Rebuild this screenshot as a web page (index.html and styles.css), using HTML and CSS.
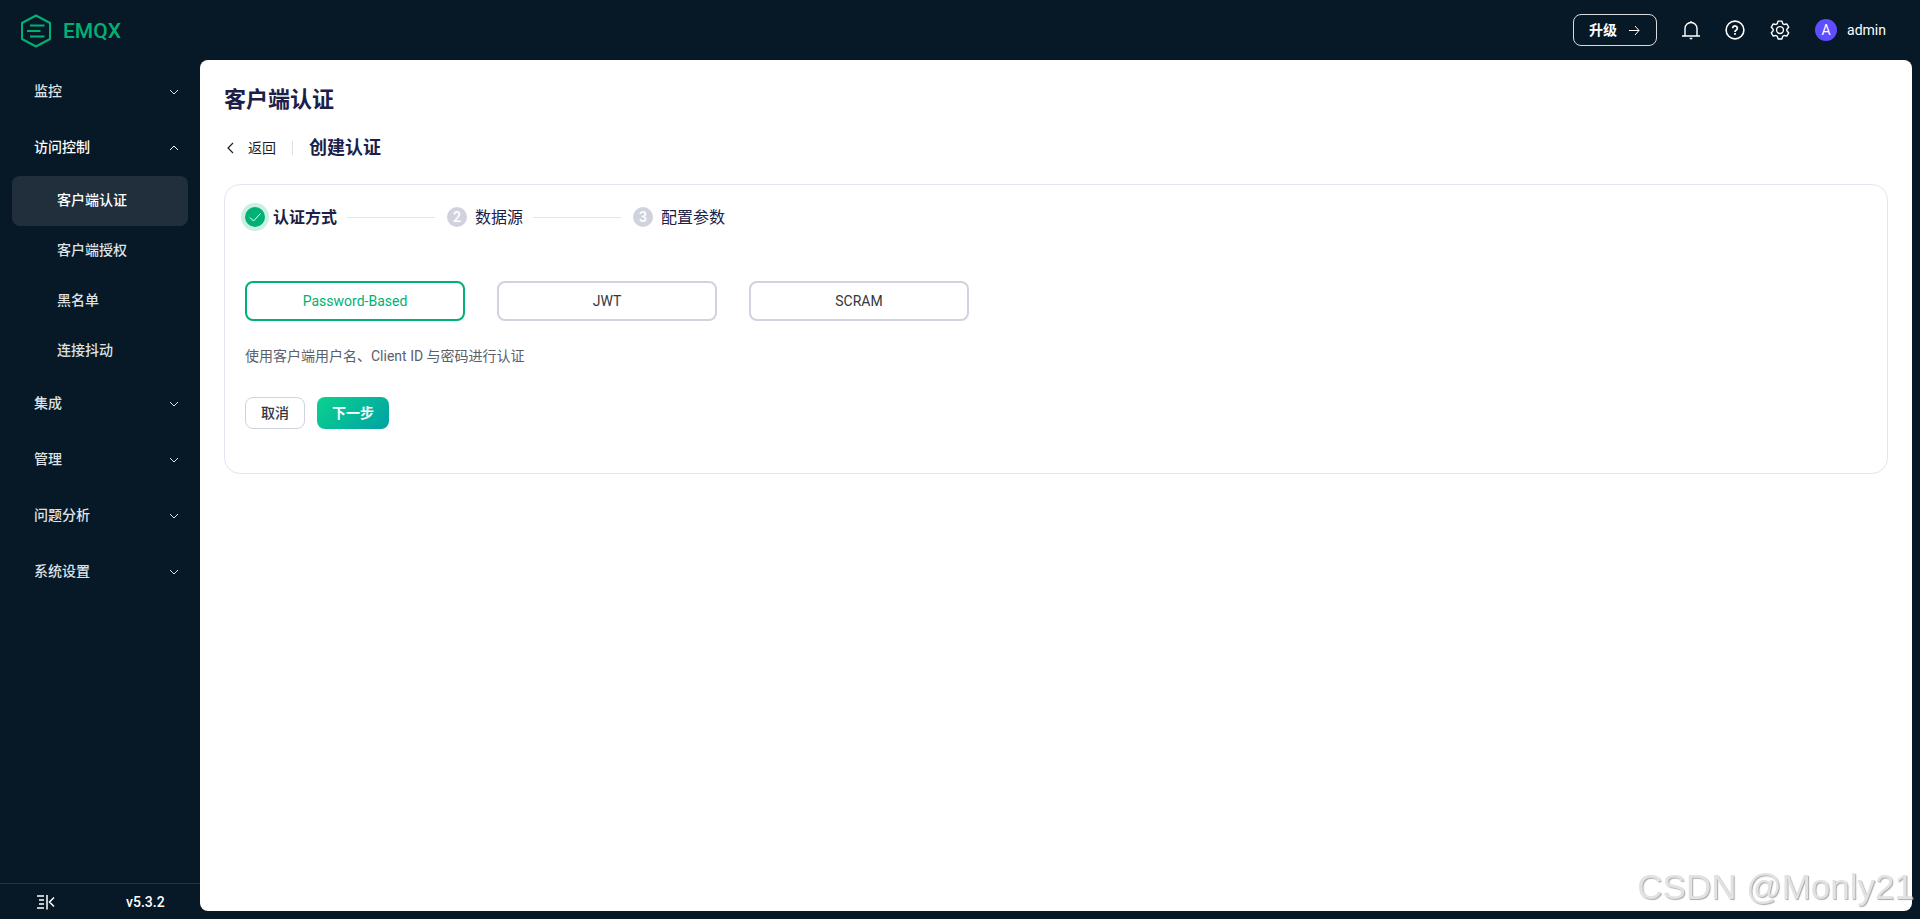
FILE: index.html
```html
<!DOCTYPE html>
<html lang="zh-CN">
<head>
<meta charset="utf-8">
<title>EMQX Dashboard</title>
<link rel="stylesheet" href="styles.css">
</head>
<body>
<svg class="defs" aria-hidden="true">
  <symbol id="chevron" viewBox="0 0 14 14"><path d="M3 5l4 4 4-4" fill="none" stroke="currentColor"/></symbol>
</svg>
<div class="app">
  <header class="topbar">
    <a class="logo" href="#">
      <svg width="32" height="34" viewBox="0 0 32 34" fill="none" stroke="currentColor" stroke-width="2" aria-hidden="true">
        <path d="M16 1.500L30 9V25L16 32.500L2 25V9Z" stroke-linejoin="round"/>
        <path d="M10 11.500H24.500M7 17H20.500M10 22.500H24.500"/>
      </svg>
      <span>EMQX</span>
    </a>
    <div class="tools">
      <button class="upgrade" type="button">升级
        <svg width="14" height="14" viewBox="0 0 14 14" fill="none" stroke="currentColor" aria-hidden="true"><path d="M2 7.500H12M8 3l4 4.500L8 12"/></svg>
      </button>
      <button class="tool" type="button" aria-label="通知">
        <svg width="20" height="20" viewBox="0 0 20 20" fill="none" stroke="currentColor" stroke-width="1.400" aria-hidden="true"><path d="M1 16H19M4 16V8.500a6 6 0 0 1 12 0V16M10 2.500V1M8.700 18.500h2.600"/></svg>
      </button>
      <button class="tool" type="button" aria-label="帮助">
        <svg width="20" height="20" viewBox="0 0 20 20" fill="none" stroke="currentColor" stroke-width="1.600" aria-hidden="true"><circle cx="10" cy="10" r="8.900"/><path d="M7.700 8.200a2.300 2.200 0 1 1 3.600 1.800q-1.300.8-1.300 2M10 13v1.700" stroke-width="1.800"/></svg>
      </button>
      <button class="tool" type="button" aria-label="设置">
        <svg width="22" height="22" viewBox="0 0 1024 1024" fill="currentColor" aria-hidden="true"><path d="M600.704 64a32 32 0 0 1 30.464 22.208l35.200 109.376c14.784 7.232 28.928 15.360 42.432 24.512l112.384-24.192a32 32 0 0 1 34.432 15.360L944.320 364.800a32 32 0 0 1-4.032 37.504l-77.120 85.120a357.120 357.120 0 0 1 0 49.024l77.120 85.248a32 32 0 0 1 4.032 37.504l-88.704 153.600a32 32 0 0 1-34.432 15.296L708.800 803.904c-13.440 9.088-27.648 17.280-42.368 24.512l-35.264 109.376A32 32 0 0 1 600.704 960H423.296a32 32 0 0 1-30.464-22.208L357.696 828.480a351.616 351.616 0 0 1-42.560-24.640l-112.320 24.256a32 32 0 0 1-34.432-15.360L79.680 659.200a32 32 0 0 1 4.032-37.504l77.120-85.248a357.120 357.120 0 0 1 0-48.896l-77.120-85.248A32 32 0 0 1 79.680 364.800l88.704-153.600a32 32 0 0 1 34.432-15.296l112.320 24.256c13.568-9.152 27.776-17.408 42.560-24.640l35.200-109.312A32 32 0 0 1 423.232 64H600.640zm-23.424 64H446.720l-36.352 113.088-24.512 11.968a294.113 294.113 0 0 0-34.816 20.096l-22.656 15.360-116.224-25.088-65.280 113.152 79.680 88.192-1.920 27.136a293.120 293.120 0 0 0 0 40.192l1.920 27.136-79.808 88.192 65.344 113.152 116.224-25.024 22.656 15.296a294.113 294.113 0 0 0 34.816 20.096l24.512 11.968L446.720 896h130.688l36.480-113.152 24.448-11.904a288.282 288.282 0 0 0 34.752-20.096l22.592-15.296 116.288 25.024 65.280-113.152-79.744-88.192 1.920-27.136a293.120 293.120 0 0 0 0-40.256l-1.920-27.136 79.808-88.128-65.344-113.152-116.288 24.960-22.592-15.232a287.616 287.616 0 0 0-34.752-20.096l-24.448-11.904L577.344 128zM512 320a192 192 0 1 1 0 384 192 192 0 0 1 0-384zm0 64a128 128 0 1 0 0 256 128 128 0 0 0 0-256z"/></svg>
      </button>
      <button class="user" type="button"><span class="avatar">A</span>admin</button>
    </div>
  </header>

  <aside class="sidebar">
    <nav class="menu">
      <button class="group" type="button">监控<svg class="chev"><use href="#chevron"/></svg></button>
      <button class="group open" type="button" aria-expanded="true">访问控制<svg class="chev"><use href="#chevron"/></svg></button>
      <a class="item active" href="#">客户端认证</a>
      <a class="item" href="#">客户端授权</a>
      <a class="item" href="#">黑名单</a>
      <a class="item" href="#">连接抖动</a>
      <button class="group" type="button">集成<svg class="chev"><use href="#chevron"/></svg></button>
      <button class="group" type="button">管理<svg class="chev"><use href="#chevron"/></svg></button>
      <button class="group" type="button">问题分析<svg class="chev"><use href="#chevron"/></svg></button>
      <button class="group" type="button">系统设置<svg class="chev"><use href="#chevron"/></svg></button>
    </nav>
    <footer class="side-foot">
      <button class="collapse" type="button" aria-label="收起菜单">
        <svg width="18" height="16" viewBox="0 0 18 16" fill="none" stroke="currentColor" stroke-width="1.500" aria-hidden="true"><path d="M0 2H7M2 6H7M2 10H7M0 14H7M10 1V15.500M17 3.500L12.500 8L17 12.500"/></svg>
      </button>
      <span class="version">v5.3.2</span>
    </footer>
  </aside>

  <main class="page">
    <h1>客户端认证</h1>
    <div class="crumb">
      <a class="back" href="#"><svg width="14" height="14" viewBox="0 0 14 14" fill="none" stroke="currentColor" stroke-width="1.200" aria-hidden="true"><path d="M9 2L4 7L9 12"/></svg>返回</a>
      <h2>创建认证</h2>
    </div>
    <section class="card">
      <ol class="steps">
        <li class="step current"><span class="dot"><svg width="14" height="14" viewBox="0 0 14 14" fill="none" stroke="currentColor" aria-hidden="true"><path d="M2 7.500L5.500 11L12.500 3.500"/></svg></span><span class="step-name">认证方式</span></li>
        <li class="step"><span class="dot">2</span><span class="step-name">数据源</span></li>
        <li class="step"><span class="dot">3</span><span class="step-name">配置参数</span></li>
      </ol>
      <form>
        <div class="choices" role="radiogroup" aria-label="认证方式">
          <label class="choice"><input type="radio" name="mechanism" checked>Password-Based</label>
          <label class="choice"><input type="radio" name="mechanism">JWT</label>
          <label class="choice"><input type="radio" name="mechanism">SCRAM</label>
        </div>
        <p class="hint">使用客户端用户名、Client ID 与密码进行认证</p>
        <div class="actions">
          <button class="btn" type="button">取消</button>
          <button class="btn primary" type="button">下一步</button>
        </div>
      </form>
    </section>
  </main>
</div>
<div class="watermark">CSDN @Monly21</div>
</body>
</html>
```
FILE: styles.css
```css
* { box-sizing: border-box; }

body {
  margin: 0;
  background: #071926;
  color: #1a2048;
  font: 14px/20px Roboto, "Noto Sans CJK SC", sans-serif;
}

button {
  padding: 0;
  border: 0;
  background: none;
  color: inherit;
  font: inherit;
  cursor: pointer;
}

a { color: inherit; text-decoration: none; }
h1, h2, p, ol { margin: 0; padding: 0; }
svg { display: block; flex: none; }
.defs { position: absolute; width: 0; height: 0; }

.app {
  display: grid;
  grid-template: 60px 1fr / 200px 1fr;
  min-height: 100vh;
}

/* Top bar */
.topbar {
  grid-column: 1 / -1;
  display: flex;
  align-items: center;
  justify-content: space-between;
  padding: 0 34px 0 20px;
  color: #fff;
}

.logo {
  display: flex;
  align-items: center;
  gap: 11px;
  padding-top: 2px;
  color: #00b173;
  font-size: 21px;
  font-weight: 500;
}

.tools { display: flex; align-items: center; }

.upgrade {
  display: flex;
  align-items: center;
  gap: 10px;
  height: 32px;
  margin-right: 24px;
  padding: 0 15px;
  border: 1px solid #d8dce2;
  border-radius: 8px;
  font-weight: 700;
}

.tool { margin-right: 24px; }
.user { display: flex; align-items: center; gap: 10px; }

.avatar {
  width: 22px;
  height: 22px;
  border-radius: 50%;
  background: #5e4eff;
  line-height: 22px;
}

/* Sidebar */
.sidebar { display: flex; flex-direction: column; color: #dfe2e5; }
.menu { flex: 1; padding-top: 4px; font-weight: 500; }

.group {
  display: flex;
  align-items: center;
  justify-content: space-between;
  width: 100%;
  height: 56px;
  padding: 0 19px 2px 34px;
}

.group.open { color: #fff; }
.chev { width: 14px; height: 14px; margin-top: 2px; }
.open .chev { transform: rotate(180deg); }

.item {
  display: flex;
  align-items: center;
  height: 50px;
  margin: 0 12px;
  padding: 0 0 2px 45px;
  border-radius: 8px;
}

.item.active { background: #202f3b; color: #fff; }

.side-foot {
  display: flex;
  align-items: center;
  height: 36px;
  padding-left: 37px;
  border-top: 1px solid #24343f;
  color: #fff;
  font-weight: 500;
}

.version { margin-left: 71px; }

/* Page */
.page {
  margin: 0 8px 8px 0;
  padding: 24px;
  border-radius: 8px;
  background: #fff;
}

h1 { font-size: 22px; font-weight: 700; line-height: 32px; }

.crumb {
  display: flex;
  align-items: center;
  height: 24px;
  margin: 20px 0 24px;
}

.back {
  display: flex;
  align-items: center;
  gap: 10px;
  padding-right: 16px;
  border-right: 1px solid #dcdfe6;
  color: #1d1f26;
  line-height: 14px;
}

h2 { padding-left: 16px; font-size: 18px; font-weight: 700; line-height: 24px; }

.card {
  padding: 20px 20px 44px;
  border: 1px solid #e2e4f0;
  border-radius: 16px;
}

.steps { display: flex; list-style: none; }

.step {
  display: flex;
  align-items: center;
  gap: 8px;
  height: 24px;
  font-size: 16px;
}

.step-name { padding-top: 2px; }

.step:not(:last-child)::after {
  content: "";
  width: 88px;
  height: 1px;
  margin: 0 12px 0 2px;
  background: #dfe7e7;
}

.step.current { font-weight: 700; }

.dot {
  display: grid;
  place-items: center;
  width: 20px;
  height: 20px;
  border-radius: 50%;
  background: #d0d3de;
  color: #fff;
  font-size: 14px;
  font-weight: 500;
  line-height: 20px;
}

.current .dot { background: #00b173; box-shadow: 0 0 0 4px #ccefe3; }

.choices { display: flex; flex-wrap: wrap; gap: 32px; margin-top: 52px; }

.choice {
  display: grid;
  place-items: center;
  width: 220px;
  height: 40px;
  border: 2px solid #d0d3de;
  border-radius: 8px;
  color: #33363d;
  cursor: pointer;
}

.choice:has(:checked) { border-color: #00b173; color: #00b173; }
.choice input { position: absolute; margin: 0; opacity: 0; }

.hint { margin: 25px 0 31px; color: #5b5e6b; }
.actions { display: flex; gap: 12px; }

.btn {
  height: 32px;
  padding: 0 15px;
  border: 1px solid #d0d3de;
  border-radius: 8px;
  color: #33363d;
  font-weight: 500;
}

.btn.primary {
  border: 0;
  background: linear-gradient(137deg, #0bd38d, #00a1a5);
  color: #fff;
  font-weight: 700;
}

.watermark {
  position: fixed;
  right: 6px;
  bottom: 10px;
  color: #e2e2e2;
  font: 35px/44px "Liberation Sans", sans-serif;
  text-shadow: 1px 1px 1px #aaa;
  pointer-events: none;
}
```
